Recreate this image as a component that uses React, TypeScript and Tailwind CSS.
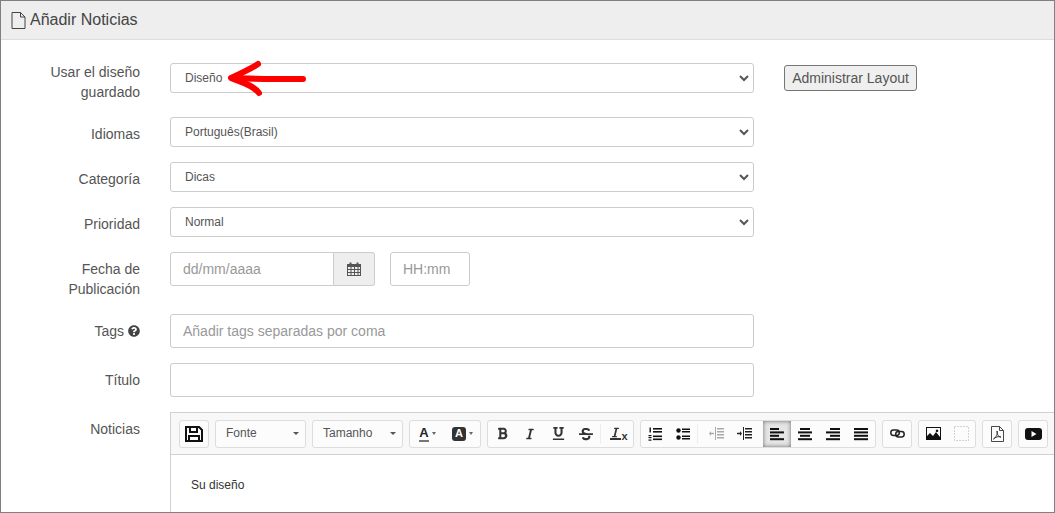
import { ReactNode } from 'react';
import { FaBold, FaItalic, FaUnderline, FaStrikethrough, FaQuestionCircle } from 'react-icons/fa';

const inputClass =
    'h-[34px] bg-white border border-[#ccc] px-3 text-[14px] text-[#555] placeholder:text-[#999] outline-none';

function Row({ label, height, labelTop, children }: { label: ReactNode; height: string; labelTop: string; children: ReactNode }) {
    return (
        <div className={`flex items-start ${height}`}>
            <div className={`w-[139px] shrink-0 text-right text-[14px] leading-[20px] text-[#555] ${labelTop}`}>{label}</div>
            <div className="ml-[30px] flex items-start">{children}</div>
        </div>
    );
}

function Select({ value }: { value: string }) {
    return (
        <div className="relative">
            <select
                className="block w-[584px] h-[30px] appearance-none bg-white border border-[#ccc] rounded-[3px] pl-[14px] text-[12px] text-[#555] outline-none"
                defaultValue={value}
            >
                <option>{value}</option>
            </select>
            <svg className="pointer-events-none absolute right-[5px] top-[12px]" width="10" height="7" viewBox="0 0 10 7" fill="none" stroke="#555" strokeWidth="2">
                <path d="M1 1l4 4 4-4" />
            </svg>
        </div>
    );
}

function Btn({ children, active, className = 'w-[28px]' }: { children: ReactNode; active?: boolean; className?: string }) {
    return (
        <div
            className={`${className} h-[26px] flex items-center text-[#333] ${
                active ? 'bg-[#e5e5e5] shadow-[inset_0_0_4px_rgba(0,0,0,0.55)] justify-center' : 'justify-center'
            }`}
        >
            {children}
        </div>
    );
}

function Group({ children }: { children: ReactNode }) {
    return <div className="flex h-[28px] items-center border border-[#ddd] rounded-[3px] bg-white/60">{children}</div>;
}

function Combo({ label }: { label: string }) {
    return (
        <div className="w-[91px] h-[28px] flex items-center justify-between border border-[#ddd] rounded-[3px] bg-white/60 pl-[10px] pr-[6px] pb-[1px] text-[12px] text-[#555]">
            {label}
            <span className="w-0 h-0 border-x-[3px] border-x-transparent border-t-[3px] border-t-[#555]" />
        </div>
    );
}

function Lines({ rows }: { rows: [number, number][] }) {
    return (
        <svg width="16" height="14" viewBox="0 0 16 14" fill="#111">
            {rows.map(([x, w], i) => (
                <rect key={i} x={x} y={1 + i * 3.4} width={w} height="2" />
            ))}
        </svg>
    );
}

function Caret() {
    return <span className="ml-[3px] w-0 h-0 border-x-[2.5px] border-x-transparent border-t-[3px] border-t-[#666]" />;
}

function Separator() {
    return <span className="h-[20px] w-px bg-[#eee]" />;
}

function IndentIcon({ color, flip }: { color: string; flip?: boolean }) {
    return (
        <svg width="15" height="13" viewBox="0 0 15 13" fill={color}>
            <rect x="6" y="0" width="1" height="13" />
            <rect x="8" y="1" width="7" height="1.5" />
            <rect x="8" y="4" width="7" height="1.5" />
            <rect x="8" y="7" width="7" height="1.5" />
            <rect x="8" y="10" width="7" height="1.5" />
            {flip ? <path d="M0 5.75h3V4l2 2.5-2 2.5V7.25H0z" /> : <path d="M5 5.75H2V4L0 6.5 2 9V7.25h3z" />}
        </svg>
    );
}

export default function App() {
    return (
        <div className="relative h-[513px] w-[1055px] overflow-hidden border border-[#808080] bg-white font-['Liberation_Sans',Arial,sans-serif]">
            {/* Panel heading */}
            <div className="flex h-[39px] items-center border-b border-[#ddd] bg-[#eee] pl-[10px] text-[16px] text-[#444]">
                <svg width="15" height="17" viewBox="0 0 15 17" fill="none" stroke="#444" strokeWidth="1" className="mr-[4px]">
                    <path d="M1 .5h8.5l4.5 4.5v11.5H1zM9.5.5V5H14" />
                </svg>
                Añadir Noticias
            </div>

            {/* Form */}
            <div className="pt-[23px]">
                <Row
                    height="h-[54px]"
                    labelTop="-mt-[1px]"
                    label={
                        <>
                            Usar el diseño
                            <br />
                            guardado
                        </>
                    }
                >
                    <Select value="Diseño" />
                    <button className="ml-[30px] mt-[2px] h-[26px] w-[133px] rounded-[3px] border border-[#767676] bg-[#efefef] text-[14px] text-[#555]">
                        Administrar Layout
                    </button>
                </Row>
                <Row height="h-[45px]" labelTop="pt-[7px]" label="Idiomas">
                    <Select value="Português(Brasil)" />
                </Row>
                <Row height="h-[45px]" labelTop="pt-[7px]" label="Categoría">
                    <Select value="Dicas" />
                </Row>
                <Row height="h-[45px]" labelTop="pt-[7px]" label="Prioridad">
                    <Select value="Normal" />
                </Row>
                <Row
                    height="h-[62px]"
                    labelTop="pt-[7px]"
                    label={
                        <>
                            Fecha de
                            <br />
                            Publicación
                        </>
                    }
                >
                    <input className={`${inputClass} w-[164px] rounded-l-[3px]`} placeholder="dd/mm/aaaa" />
                    <div className="flex h-[34px] w-[41px] items-center justify-center rounded-r-[3px] border border-l-0 border-[#ccc] bg-[#eee]">
                        <svg width="14" height="14" viewBox="0 0 14 14" fill="#555">
                            <path d="M0 2h2.5V.5h2V2h5V.5h2V2H14v12H0zM1 5v2h2.5V5zm3.5 0v2h2.5V5zM8 5v2h2.5V5zm3.5 0v2H13V5zM1 8v2h2.5V8zm3.5 0v2h2.5V8zM8 8v2h2.5V8zm3.5 0v2H13V8zM1 11v2h2.5v-2zm3.5 0v2h2.5v-2zM8 11v2h2.5v-2zm3.5 0v2H13v-2z" fillRule="evenodd" />
                        </svg>
                    </div>
                    <input className={`${inputClass} ml-[15px] w-[80px] rounded-[3px]`} placeholder="HH:mm" />
                </Row>
                <Row
                    height="h-[49px]"
                    labelTop="pt-[7px]"
                    label={
                        <span className="inline-flex items-center gap-[4px]">
                            Tags <FaQuestionCircle size={12} className="text-[#444]" />
                        </span>
                    }
                >
                    <input className={`${inputClass} w-[584px] rounded-[3px]`} placeholder="Añadir tags separadas por coma" />
                </Row>
                <Row height="h-[49px]" labelTop="pt-[7px]" label="Título">
                    <input className={`${inputClass} w-[584px] rounded-[3px]`} />
                </Row>
                <Row height="h-[110px]" labelTop="pt-[7px]" label="Noticias">
                    <div className="w-[900px] border border-[#d1d1d1]">
                        {/* Editor toolbar */}
                        <div className="flex h-[42px] items-center gap-[6px] border-b border-[#d1d1d1] bg-[#f8f8f8] pl-[8px]">
                            <Group>
                                <Btn>
                                    <svg width="18" height="16" viewBox="0 0 18 16" fill="none" stroke="#111" strokeWidth="2">
                                        <path d="M2 1h12l3 3v11H1V1zM5 1v5h7V1M4 15v-5h10v5" />
                                    </svg>
                                </Btn>
                            </Group>
                            <Combo label="Fonte" />
                            <Combo label="Tamanho" />
                            <Group>
                                <div className="flex h-[26px] w-[35px] items-center justify-center">
                                    <span className="border-b-2 border-[#777] text-[13px] leading-[14px] font-bold text-[#222]">A</span>
                                    <Caret />
                                </div>
                                <div className="flex h-[26px] w-[35px] items-center justify-center">
                                    <span className="flex h-[14px] w-[14px] items-center justify-center rounded-[3px] bg-[#333] text-[11px] font-bold text-white">A</span>
                                    <Caret />
                                </div>
                            </Group>
                            <Group>
                                <Btn><FaBold size={13} /></Btn>
                                <Btn><FaItalic size={12} /></Btn>
                                <Btn><FaUnderline size={13} /></Btn>
                                <Btn><FaStrikethrough size={14} /></Btn>
                                <Separator />
                                <Btn className="w-[32px] pl-[4px]">
                                    <span className="flex items-end">
                                        <span className="border-b-2 border-[#333]">
                                            <FaItalic size={11} />
                                        </span>
                                        <span className="text-[11px] leading-[8px] font-bold">x</span>
                                    </span>
                                </Btn>
                            </Group>
                            <Group>
                                <Btn>
                                    <svg width="14" height="14" viewBox="0 0 14 14" fill="#111">
                                        <rect x="5" y="1" width="9" height="1.6" />
                                        <rect x="5" y="4" width="9" height="1.6" />
                                        <rect x="5" y="8.5" width="9" height="1.6" />
                                        <rect x="5" y="11.5" width="9" height="1.6" />
                                        <rect x="1.5" y="0.5" width="1.4" height="5" />
                                        <rect x="0.5" y="8" width="3" height="1.2" />
                                        <rect x="0.5" y="10" width="3" height="1.2" />
                                        <rect x="0.5" y="12.5" width="3" height="1.2" />
                                    </svg>
                                </Btn>
                                <Btn>
                                    <svg width="14" height="14" viewBox="0 0 14 14" fill="#111">
                                        <circle cx="2.5" cy="3.5" r="2.2" />
                                        <circle cx="2.5" cy="10.5" r="2.2" />
                                        <rect x="6" y="1.5" width="8" height="1.5" />
                                        <rect x="6" y="4" width="8" height="1.5" />
                                        <rect x="6" y="8.5" width="8" height="1.5" />
                                        <rect x="6" y="11" width="8" height="1.5" />
                                    </svg>
                                </Btn>
                                <Separator />
                                <Btn className="w-[32px] pl-[4px]"><IndentIcon color="#aaa" /></Btn>
                                <Btn className="w-[33px] pr-[5px]"><IndentIcon color="#222" flip /></Btn>
                                <Btn active><Lines rows={[[1, 9], [1, 14], [1, 9], [1, 14]]} /></Btn>
                                <Btn><Lines rows={[[3, 10], [1, 14], [3, 10], [1, 14]]} /></Btn>
                                <Btn><Lines rows={[[5, 10], [1, 14], [5, 10], [1, 14]]} /></Btn>
                                <Btn><Lines rows={[[1, 14], [1, 14], [1, 14], [1, 14]]} /></Btn>
                            </Group>
                            <Group>
                                <Btn>
                                    <svg width="15" height="9" viewBox="0 0 15 9" fill="none" stroke="#222" strokeWidth="1.5">
                                        <rect x="0.8" y="1" width="8.5" height="5.5" rx="2.7" />
                                        <rect x="5.7" y="2.5" width="8.5" height="5.5" rx="2.7" />
                                    </svg>
                                </Btn>
                            </Group>
                            <Group>
                                <Btn>
                                    <svg width="15" height="13" viewBox="0 0 15 13" fill="#111">
                                        <path d="M0 0h15v13H0zM1 1v8l3-3 3 3 3-4 4 5V1zM11 2.5a1.3 1.3 0 1 0 .01 0z" fillRule="evenodd" />
                                    </svg>
                                </Btn>
                                <Btn>
                                    <svg width="15" height="15" viewBox="0 0 15 15" fill="none" stroke="#aaa" strokeWidth="1" strokeDasharray="1 2">
                                        <rect x="0.5" y="0.5" width="14" height="14" />
                                    </svg>
                                </Btn>
                            </Group>
                            <Group>
                                <Btn>
                                    <svg width="13" height="16" viewBox="0 0 13 16" fill="none" stroke="#333" strokeWidth="0.9">
                                        <path d="M.5.5h8l4 4v11H.5zM8.5.5v4h4" />
                                        <path d="M6 5c1 3-1 6-3.5 8 2-2 5-3 7.5-2-2 0-4-2-4-6z" stroke="#222" />
                                    </svg>
                                </Btn>
                            </Group>
                            <Group>
                                <Btn>
                                    <svg width="17" height="12" viewBox="0 0 17 12">
                                        <rect width="17" height="12" rx="3" fill="#111" />
                                        <path d="M6.5 3l5 3-5 3z" fill="#fff" />
                                    </svg>
                                </Btn>
                            </Group>
                        </div>
                        <div className="h-[60px] bg-white pl-[20px] pt-[22px] text-[12px] leading-[17px] text-[#333]">Su diseño</div>
                    </div>
                </Row>
            </div>

            {/* Red annotation arrow drawn over the screenshot */}
            <svg className="absolute left-[224px] top-[58px]" width="86" height="40" viewBox="0 0 86 40" fill="none" stroke="#f00" strokeLinecap="round" strokeLinejoin="round">
                <path d="M8 19c22 1 50 1 70 1" strokeWidth="6" />
                <path d="M33 5C24 11 14 15 6 19c9 4 21 6 28 15" strokeWidth="6" />
            </svg>
        </div>
    );
}
